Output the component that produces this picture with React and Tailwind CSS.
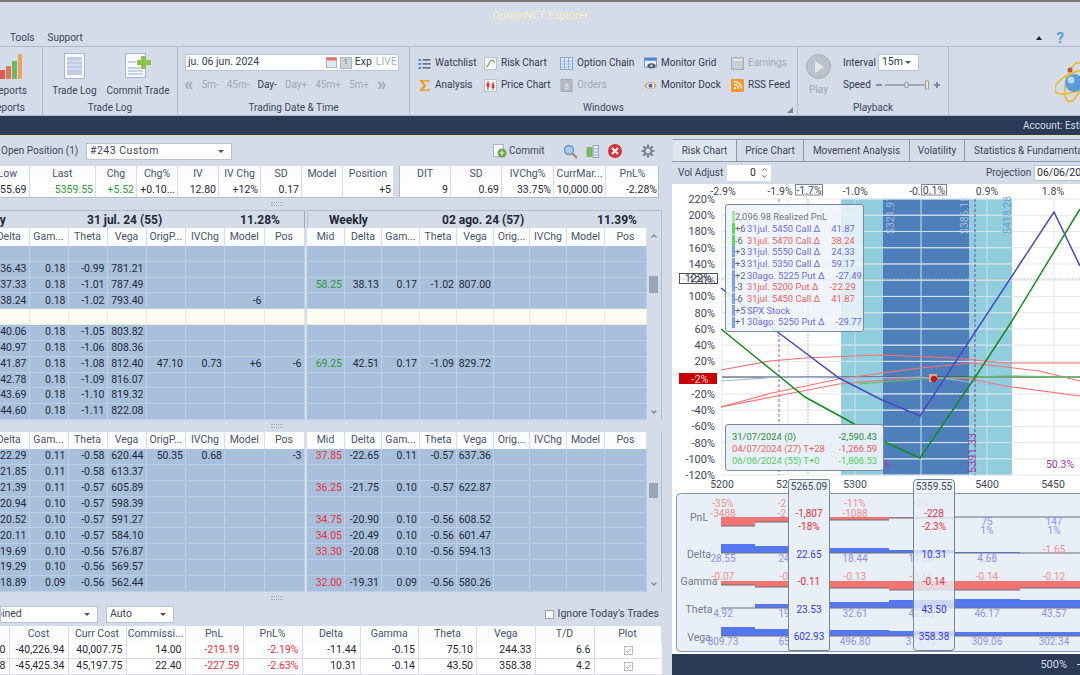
import { Check, ChevronDown, ChevronUp, Rss } from "lucide-react";

const topCols = "grid-cols-[29.5px_66.5px_41px_41px_41px_42px_41px_41px_51px]";
const top2Cols = "grid-cols-[51px_51px_52px_52px_54px]";
const leftCols = "grid-cols-[29.5px_39px_39px_39px_39.5px_39px_39.5px_40px]";
const rightCols = "grid-cols-[38px_37px_38px_37px_37px_36px_37px_38px_42px]";
const bottomCols = "grid-cols-[9.5px_59px_58px_59px_58px_59px_58px_58.5px_58px_58.5px_59px_67px]";

const upperLeft = [
  [],
  ["36.43", "0.18", "-0.99", "781.21"],
  ["37.33", "0.18", "-1.01", "787.49"],
  ["38.24", "0.18", "-1.02", "793.40", "", "", "-6"],
  "atm",
  ["40.06", "0.18", "-1.05", "803.82"],
  ["40.97", "0.18", "-1.06", "808.36"],
  ["41.87", "0.18", "-1.08", "812.40", "47.10", "0.73", "+6", "-6"],
  ["42.78", "0.18", "-1.09", "816.07"],
  ["43.69", "0.18", "-1.10", "819.32"],
  ["44.60", "0.18", "-1.11", "822.08"],
];
const upperRight = [
  [], [],
  ["58.25", "38.13", "0.17", "-1.02", "807.00"],
  [], "atm", [], [],
  ["69.25", "42.51", "0.17", "-1.09", "829.72"],
  [], [], [],
];
const lowerLeft = [
  ["-22.29", "0.11", "-0.58", "620.44", "50.35", "0.68", "", "-3"],
  ["-21.85", "0.11", "-0.58", "613.37"],
  ["-21.39", "0.11", "-0.57", "605.89"],
  ["-20.94", "0.10", "-0.57", "598.39"],
  ["-20.52", "0.10", "-0.57", "591.27"],
  ["-20.11", "0.10", "-0.57", "584.10"],
  ["-19.69", "0.10", "-0.56", "576.87"],
  ["-19.29", "0.10", "-0.56", "569.57"],
  ["-18.89", "0.09", "-0.56", "562.44"],
];
const lowerRight = [
  ["37.85", "-22.65", "0.11", "-0.57", "637.36"],
  [],
  ["36.25", "-21.75", "0.10", "-0.57", "622.87"],
  [],
  ["34.75", "-20.90", "0.10", "-0.56", "608.52"],
  ["34.05", "-20.49", "0.10", "-0.56", "601.47"],
  ["33.30", "-20.08", "0.10", "-0.56", "594.13"],
  [],
  ["32.00", "-19.31", "0.09", "-0.56", "580.26"],
];
const chainHead = [<span key="d" className="mr-[11px]">Delta</span>, "Gam...", "Theta", "Vega", "OrigP...", "IVChg", "Model", "Pos"];
const chainHead2 = ["Mid", "Delta", "Gam...", "Theta", "Vega", "Orig...", "IVChg", "Model", "Pos"];

function Head({ cols, items, height = "h-[18px]" }) {
  return (
    <div className={`grid ${cols} ${height} bg-[#fbfcfe] text-[#4a5568]`}>
      {items.map((t, i) => (
        <div key={i} className="overflow-hidden whitespace-nowrap text-center border-r border-[#d6dde8] flex items-center justify-center">
          {t}
        </div>
      ))}
    </div>
  );
}

function Rows({ cols, rows, count, midColor }) {
  return (
    <div className="flex-1 flex flex-col min-h-0 bg-[#a8c0dc]">
      {rows.map((r, i) => (
        <div key={i} className={`grid ${cols} flex-1 min-h-0 ${r === "atm" ? "bg-[#fffdf2]" : ""}`}>
          {Array.from({ length: count }).map((_, c) => (
            <div
              key={c}
              className={`overflow-hidden whitespace-nowrap flex items-center justify-end pr-[2px] border-r border-b ${
                r === "atm" ? "border-[#ece8da]" : "border-[#bccfe4]"
              } ${midColor && c === 0 ? midColor : "text-[#1f2937]"}`}
            >
              {r === "atm" ? "" : r[c]}
            </div>
          ))}
        </div>
      ))}
    </div>
  );
}

function Scrollbar({ thumbTop }) {
  return (
    <div className="w-[14.5px] bg-[#d5dce9] flex flex-col items-center text-[#7b8696]">
      <ChevronUp size={8} strokeWidth={4} className={`mt-[4px] ${thumbTop === "upper" ? "" : "opacity-0"}`} />
      <div className={`w-[9px] bg-[#9aa7b9] ${thumbTop === "upper" ? "mt-[36px] h-[17px]" : "mt-[39px] h-[15px]"}`} />
      <ChevronDown size={8} strokeWidth={4} className="mt-auto mb-[4px]" />
    </div>
  );
}

function Splitter() {
  return (
    <div className="h-[12px] flex items-center pl-[271px]">
      <div className="w-[12px] h-[4px] border-y border-dotted border-[#9aa5b5]" />
    </div>
  );
}

function Select({ children, className }) {
  return (
    <div className={`h-[17px] bg-white border border-[#b8c2d0] flex items-center justify-between pr-[7px] pl-[3px] overflow-hidden whitespace-nowrap ${className}`}>
      <span className="min-w-0">{children}</span>
      <span className="w-0 h-0 border-x-[3px] border-x-transparent border-t-[3px] border-t-[#555]" />
    </div>
  );
}

function WinItem({ icon, label, off }) {
  return (
    <div className={`flex items-center gap-[4px] h-[22px] whitespace-nowrap ${off ? "text-[#a0a9b6]" : "text-[#2f3b4e]"}`}>
      <span className="w-[13px] h-[13px] flex items-center justify-center shrink-0">{icon}</span>
      {label}
    </div>
  );
}

function Group({ width, label, children, last }) {
  return (
    <div className={`${width} flex flex-col shrink-0 ${last ? "" : "border-r border-[#aebace]"}`}>
      <div className="flex-1 min-h-0">{children}</div>
      <div className="h-[18px] pt-[3px] flex items-center justify-center text-[#3c4759] whitespace-nowrap overflow-hidden">{label}</div>
    </div>
  );
}

const IconWatch = (
  <svg viewBox="0 0 13 13" className="w-[13px] h-[13px]">
    {[2, 6, 10].map((y) => (
      <g key={y}>
        <rect x="0.5" y={y} width="2.5" height="2" fill="#4a8ad8" />
        <rect x="4.5" y={y + 0.3} width="8" height="1.2" fill="#3c4759" />
      </g>
    ))}
  </svg>
);
const IconSigma = (
  <svg viewBox="0 0 13 13" className="w-[13px] h-[13px]">
    <path d="M1.5 1h10v3l-2-1.5H5l3.5 4L5 10.500h4.500l2-1.500v3h-10v-1l4-4.500-4-4.500z" fill="#e8a030" />
  </svg>
);
const IconRisk = (
  <svg viewBox="0 0 13 13" className="w-[13px] h-[13px]">
    <rect x="0.5" y="0.5" width="12" height="12" fill="#f3f5f8" stroke="#b9c2ce" />
    <path d="M2 10c3 0 3-7 6-7 1.500 0 1 2 3 2" fill="none" stroke="#6da84e" strokeWidth="1.100" />
  </svg>
);
const IconPrice = (
  <svg viewBox="0 0 13 13" className="w-[13px] h-[13px]">
    <rect x="0.5" y="0.5" width="12" height="12" fill="#f5f6f9" stroke="#b9c2ce" />
    <path d="M4 2v9M9 3v8" stroke="#a33" strokeWidth="1" />
    <rect x="2.700" y="4" width="2.600" height="4" fill="#d33" />
    <rect x="7.700" y="5" width="2.600" height="4" fill="#d33" />
  </svg>
);
const IconChain = (
  <svg viewBox="0 0 13 13" className="w-[13px] h-[13px]">
    <rect x="0.5" y="0.5" width="12" height="12" fill="#e5effb" stroke="#7fa7d8" />
    <path d="M0.5 4h12M0.5 7h12M0.5 10h12M4.500 1v12M8.500 1v12" stroke="#7fa7d8" strokeWidth="0.800" />
  </svg>
);
const IconOrders = (
  <svg viewBox="0 0 13 13" className="w-[13px] h-[13px]">
    <rect x="1" y="0.5" width="11" height="12" fill="#b4bac4" stroke="#a3a9b3" />
    <text x="6.500" y="10" fontSize="8" textAnchor="middle" fill="#eef0f3">$</text>
  </svg>
);
const IconMonitorGrid = (
  <svg viewBox="0 0 14 13" className="w-[14px] h-[13px]">
    <rect x="0.5" y="0.5" width="13" height="10" fill="#e9f0f8" stroke="#6e94c4" />
    <rect x="0.5" y="0.5" width="13" height="3" fill="#4f88cc" />
    <ellipse cx="8" cy="9" rx="4.500" ry="2.800" fill="#55606e" />
    <circle cx="8" cy="9" r="1.300" fill="#cfe0f3" />
  </svg>
);
const IconEye = (
  <svg viewBox="0 0 14 13" className="w-[14px] h-[13px]">
    <ellipse cx="7" cy="6.500" rx="6.500" ry="3.800" fill="#c9a47c" />
    <ellipse cx="7" cy="6.800" rx="4" ry="3" fill="#eef2f6" />
    <circle cx="7" cy="6.800" r="2.200" fill="#4e6a8c" />
  </svg>
);
const IconEarnings = (
  <svg viewBox="0 0 13 13" className="w-[13px] h-[13px]">
    <rect x="0.5" y="0.5" width="12" height="12" fill="#c5cad2" stroke="#a8aeb8" />
    <rect x="2" y="2" width="9" height="2" fill="#e5e8ec" />
    <path d="M3 7h7M3 9.500h7" stroke="#e5e8ec" strokeDasharray="1 1" />
  </svg>
);

function Ribbon() {
  return (
    <div className="h-[70px] flex border-y border-[#aebace] text-[#3c4759] text-[10px]">
      <Group width="w-[43px]" label={<div className="pl-[0px] -ml-[27px]">Reports</div>}>
        <div className="h-full flex flex-col items-end pr-[15px] overflow-hidden">
          <svg viewBox="0 0 36 26" className="w-[36px] h-[26px] mt-[7px] shrink-0 -translate-x-[7px] mr-[-16px]">
            <rect x="0" y="16" width="5" height="9" fill="#dd5b52" />
            <rect x="6" y="12" width="5" height="13" fill="#e0785a" />
            <rect x="12" y="7" width="5" height="18" fill="#74b65d" />
            <rect x="18" y="0" width="4" height="25" fill="#f0a35c" />
          </svg>
          <div className="mt-[6px] whitespace-nowrap">Reports</div>
        </div>
      </Group>

      <Group width="w-[135px]" label="Trade Log">
        <div className="flex pt-[6px] text-center">
          <div className="w-[57px] pl-[6px] flex flex-col items-center">
            <svg viewBox="0 0 21 26" className="w-[21px] h-[26px]">
              <rect x="0.5" y="0.5" width="20" height="25" fill="#f7f9fc" stroke="#a9b5c8" />
              <rect x="3" y="4" width="15" height="18" fill="#c0cde0" />
              <path d="M3 8h15M3 12h15M3 16h15" stroke="#e3e9f2" />
            </svg>
            <div className="mt-[7px] whitespace-nowrap">Trade Log</div>
          </div>
          <div className="w-[76px] flex flex-col items-center">
            <svg viewBox="0 0 26 25" className="w-[26px] h-[25px]">
              <rect x="0.5" y="0.5" width="20" height="24" fill="#f7f9fc" stroke="#a9b5c8" />
              <path d="M3 9h8M3 15h15M3 18h15M3 21h15" stroke="#b9c7da" strokeWidth="1.500" />
              <path d="M16 3h5v4h5v5h-5v4h-5v-4h-4V7h4z" fill="#8cc24a" />
            </svg>
            <div className="mt-[8px] whitespace-nowrap">Commit Trade</div>
          </div>
        </div>
      </Group>

      <Group width="w-[232px]" label="Trading Date & Time">
        <div className="pl-[7px] pt-[7px]">
          <div className="w-[214px] h-[17px] bg-white border border-[#bcc6d4] flex items-center pl-[2px] pr-[1px] text-[#2f3b4e] text-[10.5px]">
            <span className="flex-1">ju. 06 jun. 2024</span>
            <svg viewBox="0 0 11 11" className="w-[11px] h-[11px] mr-[3px]">
              <rect x="0.500" y="0.500" width="10" height="10" fill="#dfe7f2" stroke="#a9b5c8" />
              <rect x="0.500" y="0.500" width="10" height="3" fill="#e8736b" />
            </svg>
            <span className="w-[12px] h-[12px] bg-[#cfd3d9] border border-[#b0b5bd] mr-[3px] flex items-center justify-center text-[7px] text-[#666]">1</span>
            <span className="mr-[4px]">Exp</span>
            <span className="text-[#a8b2c0]">LIVE</span>
          </div>
          <div className="flex gap-[8px] items-center h-[22px] mt-[3px] -ml-[1px] text-[#a0a9b6] whitespace-nowrap">
            <span className="text-[19px] leading-none font-bold -mt-[3px] text-[#a3abb6]">«</span>
            <span>5m-</span>
            <span>45m-</span>
            <span className="text-[#2f3b4e]">Day-</span>
            <span>Day+</span>
            <span>45m+</span>
            <span>5m+</span>
            <span className="text-[19px] leading-none font-bold -mt-[3px] text-[#a3abb6]">»</span>
          </div>
        </div>
      </Group>

      <Group width="w-[388px]" label={<div className="relative w-[388px] text-center">Windows<span className="absolute right-[4px] bottom-[0px] w-0 h-0 border-l-[6px] border-l-transparent border-b-[6px] border-b-[#7b8696]" /></div>}>
        <div className="grid grid-cols-[66px_76px_84px_87px_67px] pl-[8px] pt-[5px]">
          <WinItem icon={IconWatch} label="Watchlist" />
          <WinItem icon={IconRisk} label="Risk Chart" />
          <WinItem icon={IconChain} label="Option Chain" />
          <WinItem icon={IconMonitorGrid} label="Monitor Grid" />
          <WinItem icon={IconEarnings} label="Earnings" off />
          <WinItem icon={IconSigma} label="Analysis" />
          <WinItem icon={IconPrice} label="Price Chart" />
          <WinItem icon={IconOrders} label="Orders" off />
          <WinItem icon={IconEye} label="Monitor Dock" />
          <WinItem
            icon={
              <span className="w-[13px] h-[13px] bg-[#f09a30] flex items-center justify-center rounded-[1px]">
                <Rss size={10} color="white" strokeWidth={3} />
              </span>
            }
            label="RSS Feed"
          />
        </div>
      </Group>

      <Group width="w-[151px]" label="Playback">
        <div className="flex pl-[8px] pt-[7px] gap-[12px]">
          <div className="flex flex-col items-center w-[25px] text-[#a0a9b6]">
            <div className="w-[25px] h-[25px] rounded-full bg-[#bcc2cb] border border-[#aab1bb] flex items-center justify-center">
              <span className="w-0 h-0 ml-[2px] border-y-[6px] border-y-transparent border-l-[9px] border-l-[#e3e6ea]" />
            </div>
            <div className="mt-[6px]">Play</div>
          </div>
          <div className="flex-1">
            <div className="flex items-center h-[17px] gap-[2px] text-[#2f3b4e]">
              <span>Interval</span>
              <Select className="w-[41px] text-[10.5px]">15m</Select>
            </div>
            <div className="flex items-center h-[22px] gap-[5px] mt-[3px] text-[#2f3b4e]">
              <span>Speed</span>
              <svg viewBox="0 0 66 10" className="w-[66px] h-[10px]">
                <path d="M0 5h6" stroke="#6f7a8a" strokeWidth="1.500" />
                <path d="M9 5h40" stroke="#8d97a5" strokeWidth="1.500" />
                <rect x="29" y="2.500" width="3" height="5" fill="#dfe4ec" stroke="#7b8696" strokeWidth="0.700" />
                <rect x="49.500" y="1" width="3" height="8" fill="#f1e7c0" stroke="#7b8696" strokeWidth="0.700" />
                <path d="M58 5h6M61 2v6" stroke="#6f7a8a" strokeWidth="1.600" />
              </svg>
            </div>
          </div>
        </div>
      </Group>

      <div className="flex-1 overflow-hidden pl-[106px] pt-[13px]">
        <svg viewBox="0 0 45 44" className="w-[45px] h-[44px]">
          <g fill="none" stroke="#e8bc33" strokeWidth="1.800">
            <ellipse cx="19" cy="22" rx="8" ry="20" transform="rotate(15 19 22)" />
            <ellipse cx="19" cy="22" rx="9" ry="21" transform="rotate(65 19 22)" />
          </g>
          <circle cx="19" cy="23" r="9" fill="#5a9ad8" />
          <circle cx="16" cy="20" r="3.500" fill="#b9d8f3" />
          <circle cx="15" cy="10" r="2.500" fill="#c0563a" />
        </svg>
      </div>
    </div>
  );
}

function LeftPanel() {
  return (
    <div className="w-[672px] shrink-0 bg-[#d5dce9] overflow-hidden flex flex-col">
      <div className="h-[30px] flex items-center relative text-[#3c4759]">
        <span className="ml-[1px] w-[85px] text-[10px]">Open Position (1)</span>
        <Select className="w-[146px] tracking-[0.5px]">#243 Custom</Select>
        <div className="ml-auto mr-[17px] flex items-center">
          <svg viewBox="0 0 14 14" className="w-[14px] h-[14px] mr-[2px]">
            <rect x="0.500" y="0.500" width="10" height="12" fill="#f6f8fb" stroke="#aab4c3" />
            <circle cx="9" cy="9" r="4.500" fill="#6aa84f" />
            <path d="M9 6.500v5M6.500 9h5" stroke="#dff0d5" strokeWidth="1.200" />
          </svg>
          <span className="w-[54px] text-[10px]">Commit</span>
          <svg viewBox="0 0 15 15" className="w-[15px] h-[15px]">
            <circle cx="6" cy="6" r="4.500" fill="#a8cdf0" stroke="#6b93c4" strokeWidth="1.300" />
            <path d="M9.500 9.500 14 14" stroke="#b5894e" strokeWidth="2.200" />
          </svg>
          <svg viewBox="0 0 13 13" className="w-[13px] h-[13px] ml-[8px]">
            <rect x="0.500" y="2" width="6" height="10" fill="#7cb85f" />
            <rect x="7" y="0.500" width="5.500" height="12" fill="#e9eef5" stroke="#8fa4bf" />
            <path d="M7 4h6M7 7h6M7 10h6" stroke="#8fa4bf" />
          </svg>
          <span className="ml-[9px] w-[14px] h-[14px] rounded-full bg-[#d4333c] text-white flex items-center justify-center">
            <svg viewBox="0 0 8 8" className="w-[8px] h-[8px]">
              <path d="M1 1l6 6M7 1l-6 6" stroke="white" strokeWidth="2" />
            </svg>
          </span>
          <svg viewBox="0 0 24 24" className="w-[14px] h-[14px] ml-[19px]" fill="none" stroke="#7b8696" strokeWidth="3.500">
            <circle cx="12" cy="12" r="6" />
            <path d="M12 1v5M12 18v5M1 12h5M18 12h5M4 4l4 4M16 16l4 4M20 4l-4 4M8 16l-4 4" />
          </svg>
        </div>
      </div>

      <div className="flex gap-[5px] h-[32px]">
        <div className="w-[394px] border-r border-b border-[#b3becd]">
          <Head cols={topCols} height="h-[17px]" items={[<span key="l" className="mr-[14px]">Low</span>, "Last", "Chg", "Chg%", "IV", "IV Chg", "SD", "Model", "Position"]} />
          <div className={`grid ${topCols} h-[14px] bg-white text-[#1f2937]`}>
            {["5355.69", "5359.55", "+5.52", "+0.10...", "12.80", "+12%", "0.17", "", "+5"].map((v, i) => (
              <div key={i} className={`overflow-hidden whitespace-nowrap flex items-center justify-end px-[2px] border-r border-[#d6dde8] ${i === 1 || i === 2 ? "text-[#2f9a3a]" : ""}`}>
                {v}
              </div>
            ))}
          </div>
        </div>
        <div className="w-[260px] border border-t-0 border-[#b3becd]">
          <Head cols={top2Cols} height="h-[17px]" items={["DIT", "SD", "IVChg%", "CurrMar...", "PnL%"]} />
          <div className={`grid ${top2Cols} h-[14px] bg-white text-[#1f2937]`}>
            {["9", "0.69", "33.75%", "10,000.00", "-2.28%"].map((v, i) => (
              <div key={i} className="overflow-hidden whitespace-nowrap flex items-center justify-end px-[2px] border-r border-[#d6dde8]">
                {v}
              </div>
            ))}
          </div>
        </div>
      </div>

      <Splitter />

      <div className="flex gap-[2px] h-[210px]">
        <div className="w-[305px] flex flex-col border-r border-[#9faab9]">
          <div className="h-[18px] flex items-center font-bold text-[#1f2937] text-[12px] border-t border-[#b3becd] whitespace-nowrap">
            <span className="-ml-[33px] w-[120px] shrink-0">Weekly</span>
            <span className="w-[153px] shrink-0">31 jul. 24 (55)</span>
            <span>11.28%</span>
          </div>
          <Head cols={leftCols} items={chainHead} />
          <Rows cols={leftCols} rows={upperLeft} count={8} />
        </div>
        <div className="w-[354.5px] flex flex-col border-r border-[#b3becd]">
          <div className="h-[18px] flex items-center font-bold text-[#1f2937] text-[12px] border-t border-l border-[#b3becd] whitespace-nowrap">
            <span className="ml-[21px] w-[113px] shrink-0">Weekly</span>
            <span className="w-[155px] shrink-0">02 ago. 24 (57)</span>
            <span>11.39%</span>
          </div>
          <div className="flex-1 flex min-h-0">
            <div className="flex-1 flex flex-col">
              <Head cols={rightCols} items={chainHead2} />
              <Rows cols={rightCols} rows={upperRight} count={9} midColor="text-[#2f9a3a]" />
            </div>
            <Scrollbar thumbTop="upper" />
          </div>
        </div>
      </div>

      <Splitter />

      <div className="flex gap-[2px] h-[160px]">
        <div className="w-[305px] flex flex-col border-r border-[#9faab9]">
          <Head cols={leftCols} height="h-[17px]" items={chainHead} />
          <Rows cols={leftCols} rows={lowerLeft} count={8} />
        </div>
        <div className="w-[354.5px] flex border-r border-[#b3becd]">
          <div className="flex-1 flex flex-col">
            <Head cols={rightCols} height="h-[17px]" items={chainHead2} />
            <Rows cols={rightCols} rows={lowerRight} count={9} midColor="text-[#e8303c]" />
          </div>
          <Scrollbar thumbTop="lower" />
        </div>
      </div>

      <Splitter />

      <div className="h-[22px] flex items-start pt-[2px] text-[#3c4759]">
        <Select className="w-[98px]"><span className="-ml-[30px] block">Combined</span></Select>
        <Select className="w-[68px] ml-[8px]">Auto</Select>
        <label className="ml-auto mr-[13px] mt-[3px] flex items-center gap-[4px] whitespace-nowrap">
          <span className="w-[9px] h-[9px] bg-white border border-[#98a2b1]" />
          Ignore Today's Trades
        </label>
      </div>

      <div className="w-[662px] flex-1 min-h-0 text-[#1f2937]">
        <Head cols={bottomCols} height="h-[17px]" items={["", "Cost", "Curr Cost", "Commissi...", "PnL", "PnL%", "Delta", "Gamma", "Theta", "Vega", "T/D", "Plot"]} />
        {[
          ["10,000", "-40,226.94", "40,007.75", "14.00", "-219.19", "-2.19%", "-11.44", "-0.15", "75.10", "244.33", "6.6"],
          ["11,048", "-45,425.34", "45,197.75", "22.40", "-227.59", "-2.63%", "10.31", "-0.14", "43.50", "358.38", "4.2"],
        ].map((row, r) => (
          <div key={r} className={`grid ${bottomCols} h-[16px] bg-white border-b border-[#d6dde8]`}>
            {row.map((v, i) => (
              <div key={i} className={`overflow-hidden whitespace-nowrap flex items-center justify-end px-[3px] border-r border-[#d6dde8] ${i === 4 || i === 5 ? "text-[#ee3040]" : ""}`}>
                {v}
              </div>
            ))}
            <div className="flex items-center justify-center">
              <span className="w-[9px] h-[9px] border border-[#b4bcc8] flex items-center justify-center text-[#8b95a3]">
                <Check size={8} strokeWidth={3} />
              </span>
            </div>
          </div>
        ))}
      </div>
    </div>
  );
}

const yPct = (p) => 198 + (220 - p) * 0.812;
const curveRed = [
  "721,369 770,360 805,357 879,354 955,357 1005,362 1080,362",
  "721,406 772,392 839,378 920,367 972,362 1039,370 1080,380",
  "721,406 772,396 839,383 920,376 972,378 1005,385 1080,395",
];

function RiskChart() {
  const pct = [];
  for (let p = 220; p >= -120; p -= 20) pct.push(p);
  return (
    <svg viewBox="672 183 408 307" className="block w-[408px] h-[307px] bg-white">
      <rect x="841" y="198" width="171" height="276" fill="#90cddd" />
      <rect x="883" y="198" width="86" height="276" fill="#4f7fba" />
      {pct.map((p) => (
        <g key={p}>
          <path d={`M722 ${yPct(p)}H1080`} stroke="#e5e7ea" />
          <path d={`M841 ${yPct(p)}H1012`} stroke="#cfe0ec" opacity="0.8" />
          <text x="715" y={yPct(p) + 4} fontSize="11" textAnchor="end" fill="#3c4759">{p}%</text>
        </g>
      ))}
      {[722, 788, 855, 921, 987, 1054].map((x) => (
        <path key={x} d={`M${x} 198V474`} stroke={x > 841 && x < 1012 ? "#cfe0ec" : "#e5e7ea"} />
      ))}
      <path d="M808 198V474" stroke="#b8b8b8" strokeDasharray="2 1" />
      <path d="M779 198V474" stroke="#b44fc0" strokeDasharray="3 2" />
      <path d="M975 198V474" stroke="#8a3fa8" strokeDasharray="3 2" />
      <path d="M679 278H1080" stroke="#b8b8b8" strokeDasharray="2 1" strokeWidth="0.800" />
      <path d="M722 376H1080" stroke="#3a3f3f" />

      {[["-2.9%", 723], ["-1.9%", 780], ["-1.0%", 855], ["-0.", 915], ["0.9%", 987], ["1.8%", 1053]].map(([t, x]) => (
        <text key={t} x={x} y="194" fontSize="10.500" textAnchor="middle" fill="#3c4759">{t}</text>
      ))}
      <rect x="795.500" y="183.500" width="27" height="10.500" fill="white" stroke="#7b8696" />
      <text x="809" y="192.500" fontSize="10.500" textAnchor="middle" fill="#3c4759">-1.7%</text>
      <rect x="921.500" y="183.500" width="25" height="10.500" fill="white" stroke="#7b8696" />
      <text x="934" y="192.500" fontSize="10.500" textAnchor="middle" fill="#3c4759">0.1%</text>

      <g fontSize="10.500" fill="#cfe0ee" opacity="0.65">
        <text transform="translate(894,233) rotate(-90)">$321.91</text>
        <text transform="translate(968,233) rotate(-90)">$386.15</text>
        <text transform="translate(1011,233) rotate(-90)" fill="#4f7fba">5418.28</text>
      </g>
      <text transform="translate(976,472) rotate(-90)" fontSize="11" fill="#a03aa8">5391.33</text>
      <text x="1060" y="467" fontSize="10.500" textAnchor="middle" fill="#a03aa8">50.3%</text>
      <text x="887" y="467" fontSize="10.500" textAnchor="middle" fill="#a03aa8">%</text>

      {curveRed.map((c) => (
        <polyline key={c} points={c} fill="none" stroke="#f87171" strokeWidth="1.200" />
      ))}
      <polyline points="721,380 779,376 839,377 920,376 949,378 1005,386" fill="none" stroke="#9db8ee" strokeWidth="1.200" />
      <polyline points="859,383 920,378 1005,375 1080,376" fill="none" stroke="#57c85f" strokeWidth="1.200" />
      <polyline points="721,287 779,332 839,377 880,398 920,415 1054,211 1080,265" fill="none" stroke="#4a4ac4" strokeWidth="1.500" />
      <polyline points="721,328 779,375 805,396 849,420 885,441 920,457 974,378 1012,320 1080,208" fill="none" stroke="#178a22" strokeWidth="1.500" />

      <rect x="929" y="373" width="8" height="8" fill="#d9a79a" />
      <circle cx="934" cy="378" r="2.800" fill="#e01010" stroke="#7a1010" strokeWidth="0.700" />

      <rect x="679.500" y="272.500" width="38" height="10" fill="none" stroke="#555" />
      <text x="698" y="281" fontSize="11" textAnchor="middle" fill="#3c4759">122%</text>
      <rect x="679" y="372" width="38" height="11" fill="#c80000" />
      <text x="700" y="382" fontSize="11" textAnchor="middle" fill="#f3d8d8">-2%</text>

      {[["5200", 722], ["52", 782], ["5300", 855], ["5400", 987], ["5450", 1053]].map(([t, x]) => (
        <text key={t} x={x} y="487" fontSize="10.500" textAnchor="middle" fill="#3c4759">{t}</text>
      ))}
    </svg>
  );
}

const barCols = [[721, 755], [755, 822], [822, 889], [889, 955], [955, 1020], [1020, 1080]];
const metricRows = [
  { name: "PnL", x: 699, y: 520, base: 516, down: true, color: "#f47474", ends: [525, 521, 519, 517, 516, 516] },
  { name: "Delta", x: 699, y: 557, base: 552, down: false, color: "#5577f2", ends: [543, 545, 547, 549, 551, 552] },
  { name: "Gamma", x: 699, y: 584, base: 580, down: true, color: "#f47474", ends: [584, 586, 587, 589, 589, 587] },
  { name: "Theta", x: 699, y: 612, base: 607, down: false, color: "#5577f2", ends: [607, 603, 601, 599, 598, 599] },
  { name: "Vega", x: 699, y: 640, base: 635, down: false, color: "#5577f2", ends: [626, 628, 629, 630, 631, 631] },
];
const metricLabels = [
  ["-35%", 723, 506, "r"], ["-3488", 723, 516, "r"], ["-2", 782, 506, "r"], ["-2", 782, 516, "r"],
  ["-11%", 855, 506, "r"], ["-1088", 855, 516, "r"], ["-3%", 921, 506, "r"],
  ["75", 987, 524, "b"], ["1%", 987, 533, "b"], ["147", 1054, 524, "b"], ["1%", 1054, 533, "b"],
  ["28.55", 723, 561, "b"], ["24", 784, 561, "b"], ["18.44", 855, 561, "b"], ["11.68", 921, 561, "b"], ["4.68", 987, 561, "b"], ["-1.65", 1054, 552, "r"],
  ["-0.07", 723, 579, "r"], ["-0", 784, 579, "r"], ["-0.13", 855, 579, "r"], ["-0.14", 921, 579, "r"], ["-0.14", 987, 579, "r"], ["-0.12", 1054, 579, "r"],
  ["4.92", 723, 616, "b"], ["19", 784, 616, "b"], ["32.61", 855, 616, "b"], ["42.28", 921, 616, "b"], ["46.17", 987, 616, "b"], ["43.57", 1054, 616, "b"],
  ["809.73", 723, 644, "b"], ["65", 784, 644, "b"], ["496.80", 855, 644, "b"], ["373.12", 921, 644, "b"], ["309.06", 987, 644, "b"], ["302.34", 1054, 644, "b"],
];

function MetricBars() {
  return (
    <svg viewBox="672 490 408 163" className="block w-[408px] h-[163px] bg-white">
      <rect x="676.500" y="492.500" width="420" height="158" rx="4" fill="#e8eff7" stroke="#8896a8" />
      {metricRows.map((m) => (
        <g key={m.name}>
          {barCols.map(([a, b], i) => {
            const e = m.ends[i];
            const top = Math.min(m.base, e);
            const h = Math.abs(m.base - e);
            return (
              <g key={a}>
                <rect x={a} y={top} width={b - a} height={h} fill={m.color} />
                <path d={m.down ? `M${a} ${e}H${b}` : `M${a} ${m.base}H${b}`} stroke="#6a6f78" strokeWidth="1.200" />
              </g>
            );
          })}
          <text x={m.x} y={m.y} fontSize="10.500" textAnchor="middle" fill="#747c88">{m.name}</text>
        </g>
      ))}
      {metricLabels.map(([t, x, y, c], i) => (
        <text key={i} x={x} y={y} fontSize="10" textAnchor="middle" fill={c === "r" ? "#f29090" : "#8f8ff0"}>{t}</text>
      ))}
    </svg>
  );
}

function Callout({ left, head, vals, className }) {
  return (
    <div className={`absolute top-[295px] h-[172px] w-[42px] border border-[#77879a] rounded-[2px] flex flex-col items-center text-[10px] ${left} ${className}`}>
      <div className="h-[13px] leading-[13px] text-[#3c4759] whitespace-nowrap">{head}</div>
      {vals.map(([t, top, c]) => (
        <div key={t} className={`absolute whitespace-nowrap leading-[12px] ${top} ${c}`}>{t}</div>
      ))}
    </div>
  );
}

const legs = [
  ["bg-[#58d85e]", "+6", "31jul. 5450 Call Δ", "41.87", "text-[#6a6af0]"],
  ["bg-[#58d85e]", "-6", "31jul. 5470 Call Δ", "38.24", "text-[#f06060]"],
  ["bg-[#7f9fef]", "+3", "31jul. 5550 Call Δ", "24.33", "text-[#6a6af0]"],
  ["bg-[#7f9fef]", "+3", "31jul. 5350 Call Δ", "59.17", "text-[#6a6af0]"],
  ["bg-[#7f9fef]", "+2", "30ago. 5225 Put Δ", "-27.49", "text-[#6a6af0]"],
  ["bg-[#7f9fef]", "-3", "31jul. 5200 Put Δ", "-22.29", "text-[#f06060]"],
  ["bg-[#7f9fef]", "-6", "31jul. 5450 Call Δ", "41.87", "text-[#f06060]"],
  ["bg-[#7f9fef]", "+5", "SPX Stock", "", "text-[#6a6af0]"],
  ["bg-[#7f9fef]", "+1", "30ago. 5250 Put Δ", "-29.77", "text-[#6a6af0]"],
];

function RightPanel() {
  return (
    <div className="flex-1 min-w-0 bg-[#d5dce9] flex flex-col overflow-hidden text-[10px]">
      <div className="h-[26px] flex items-end border-b border-[#8e9aaa] pl-[1px] text-[#3c4759] whitespace-nowrap">
        <div className="w-[64px] shrink-0 h-[22px] flex items-center justify-center bg-[#dfe5ef] border-r border-[#8e9aaa] border-t">Risk Chart</div>
        {[["w-[67px]", "Price Chart"], ["w-[106px]", "Movement Analysis"], ["w-[55px]", "Volatility"]].map(([w, t]) => (
          <div key={t} className={`${w} shrink-0 h-[22px] flex items-center justify-center border-r border-t border-[#8e9aaa]`}>{t}</div>
        ))}
        <div className="w-[130px] shrink-0 h-[22px] flex items-center pl-[9px] border-t border-[#8e9aaa]">Statistics & Fundamentals</div>
      </div>
      <div className="h-[22px] flex items-center pl-[6px] text-[#3c4759] whitespace-nowrap">
        <span className="w-[49px] shrink-0">Vol Adjust</span>
        <div className="w-[44px] shrink-0 h-[16px] bg-white flex items-center justify-end pr-[3px] gap-[5px] text-[#1f2937] text-[10.5px]">
          0
          <span className="flex flex-col text-[#555]">
            <ChevronUp size={7} strokeWidth={3} />
            <ChevronDown size={7} strokeWidth={3} />
          </span>
        </div>
        <span className="ml-[215px] w-[48px] shrink-0">Projection</span>
        <div className="w-[60px] h-[16px] bg-white border border-[#b8c2d0] pl-[2px] flex items-center shrink-0 text-[#1f2937] text-[10.5px]">06/06/2024</div>
      </div>

      <div className="relative flex-1 min-h-0">
        <RiskChart />
        <MetricBars />

        <div className="absolute left-[53px] top-[20px] w-[139px] h-[128px] bg-[#eef3fa]/85 border border-[#7b8a9c] rounded-[3px] pt-[6px] pl-[6px] text-[9.4px]">
          <div className="flex items-center h-[11.7px] text-[#777] whitespace-nowrap">
            <span className="w-[3px] h-[11px] bg-[#a5e8a5] mr-[0px]" />
            2,096.98 Realized PnL
          </div>
          {legs.map(([bar, qty, desc, val, color]) => (
            <div key={desc + qty} className={`flex items-center h-[11.7px] whitespace-nowrap ${color}`}>
              <span className={`w-[3px] h-[11px] ${bar}`} />
              <span className="text-[#666] w-[12px]">{qty}</span>
              <span>{desc}</span>
              <span className="ml-[11px]">{val}</span>
            </div>
          ))}
        </div>

        <div className="absolute left-[53px] top-[240px] w-[159px] h-[47px] bg-[#e8eff7]/95 border border-[#7b8a9c] rounded-[3px] px-[6px] py-[6px] text-[9.4px] whitespace-nowrap">
          {[
            ["31/07/2024 (0)", "-2,590.43", "text-[#2e8b3a]"],
            ["04/07/2024 (27) T+28", "-1,266.59", "text-[#f06060]"],
            ["06/06/2024 (55) T+0", "-1,806.53", "text-[#4fcf5a]"],
          ].map(([a, b, c]) => (
            <div key={a} className={`flex justify-between h-[11.7px] items-center ${c}`}>
              <span>{a}</span>
              <span>{b}</span>
            </div>
          ))}
        </div>

        <Callout
          left="left-[116px]"
          head="5265.09"
          className="bg-[#e8eff7]"
          vals={[
            ["-1,807", "top-[28px]", "text-[#e8303c]"],
            ["-18%", "top-[41px]", "text-[#e8303c]"],
            ["22.65", "top-[69px]", "text-[#3a3ae8]"],
            ["-0.11", "top-[96px]", "text-[#e8303c]"],
            ["23.53", "top-[124px]", "text-[#3a3ae8]"],
            ["602.93", "top-[151px]", "text-[#3a3ae8]"],
          ]}
        />
        <Callout
          left="left-[241px]"
          head="5359.55"
          className="bg-[#e8eff7]/80 rounded-[4px]"
          vals={[
            ["-228", "top-[28px]", "text-[#e8303c]"],
            ["-2.3%", "top-[41px]", "text-[#e8303c]"],
            ["10.31", "top-[69px]", "text-[#3a3ae8]"],
            ["-0.14", "top-[96px]", "text-[#e8303c]"],
            ["43.50", "top-[124px]", "text-[#3a3ae8]"],
            ["358.38", "top-[151px]", "text-[#3a3ae8]"],
          ]}
        />
      </div>

      <div className="h-[22px] bg-[#2a3a57] flex items-center justify-end shrink-0 text-[#d5dce9] text-[11px] whitespace-nowrap">
        <span className="mr-[10px]">500%</span>
        <span className="w-[3px] h-[1px] bg-[#d5dce9]" />
      </div>
    </div>
  );
}

export default function App() {
  return (
    <div className="w-[1080px] h-[675px] overflow-hidden flex flex-col bg-[#d5dce9] font-['Roboto',sans-serif] text-[10.5px] leading-none">
      <div className="h-[2px] bg-[#77766f] shrink-0" />
      <div className="h-[26px] flex items-center justify-center shrink-0 text-[#f3eec8] text-[11px]">OptionNET Explorer</div>
      <div className="h-[18px] flex items-center gap-[15px] pl-[10px] pt-[2px] shrink-0 text-[#3c4759] text-[10px]">
        <span>Tools</span>
        <span className="-ml-[2px]">Support</span>
        <span className="ml-auto w-0 h-0 border-x-[3px] border-x-transparent border-b-[4px] border-b-[#222]" />
        <span className="mr-[16px] text-[15px] font-bold text-[#5b9bd5]">?</span>
      </div>
      <Ribbon />
      <div className="h-[19px] shrink-0 bg-[#2a3a57] text-[#d5dce9] text-[10px] flex items-center pl-[1023px] whitespace-nowrap overflow-hidden">Account: Estimate</div>
      <div className="h-[1px] bg-[#e4dfb0] shrink-0" />
      <div className="flex-1 min-h-0 flex">
        <LeftPanel />
        <RightPanel />
      </div>
    </div>
  );
}
